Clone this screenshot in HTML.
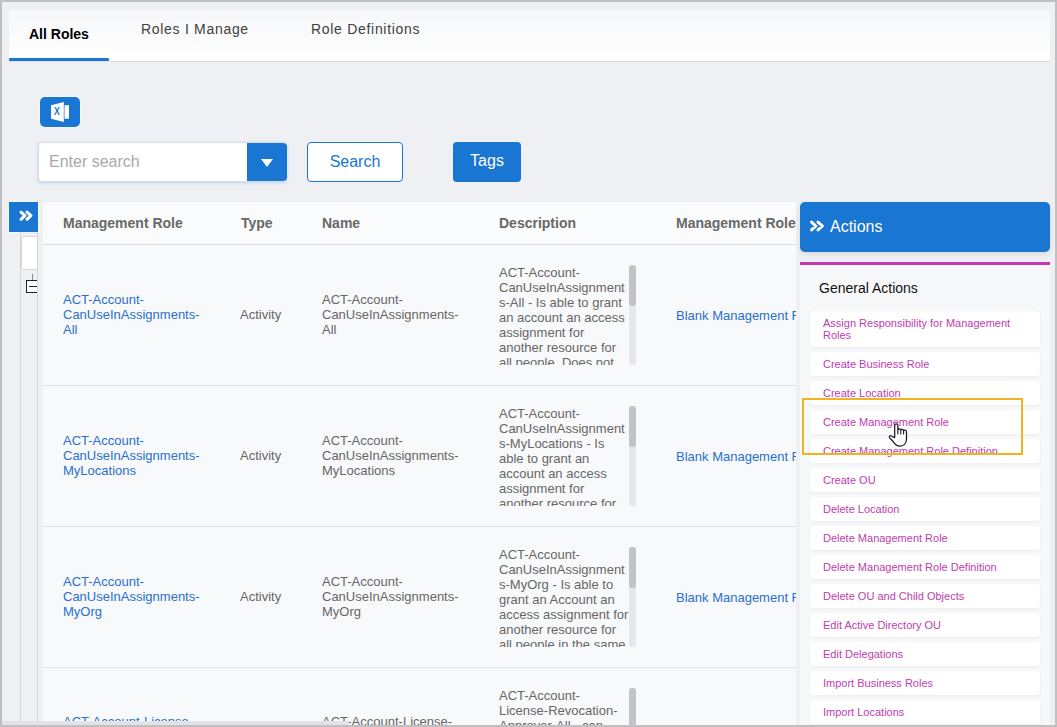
<!DOCTYPE html>
<html lang="en">
<head>
<meta charset="utf-8">
<title>Management Roles</title>
<style>
*{box-sizing:border-box;margin:0;padding:0}
html,body{width:1057px;height:727px;overflow:hidden;background:#c0c0c0}
body{font-family:"Liberation Sans",Arial,sans-serif;position:relative;color:#666}
#page{position:absolute;left:2px;top:2px;width:1053px;height:723px;background:#eff0f4;overflow:hidden}
.abs{position:absolute}
/* tabs */
#tabs{position:absolute;left:7px;top:8px;width:1041px;height:52px;background:linear-gradient(#f6f7f9,#ffffff);border-bottom:1px solid #dcdcdc}
#tabs .tab{position:absolute;top:0;height:51px;font-size:14px;color:#404040;letter-spacing:.7px;white-space:nowrap}
#tabs .tab.active{font-weight:bold;color:#000;letter-spacing:0}
#tabs .bar{position:absolute;left:0;top:48px;width:100px;height:3px;background:#1976d2;border-radius:1px}
/* toolbar */
#xl{position:absolute;left:38px;top:95px;width:40px;height:30px;background:#1976d2;border-radius:5px;box-shadow:0 0 0 1px rgba(255,255,255,.4)}
#search{position:absolute;left:36px;top:140px;width:249px;height:40px;background:#fff;border-radius:4px;border:1px solid #d9dce3;box-shadow:0 1px 3px rgba(25,118,210,.25)}
#search .ph{position:absolute;left:10px;top:0;line-height:38px;font-size:16px;color:#a9a9a9}
#search .dd{position:absolute;right:-1px;top:0;width:40px;height:38px;background:#1976d2;border-radius:0 4px 4px 0}
#search .dd:after{content:"";position:absolute;left:14px;top:16px;border-left:6px solid transparent;border-right:6px solid transparent;border-top:8px solid #fff}
#btnSearch{position:absolute;left:305px;top:140px;width:96px;height:40px;background:#fff;border:1px solid #1976d2;border-radius:4px;color:#1976d2;font-size:16px;text-align:center;line-height:38px}
#btnTags{position:absolute;left:451px;top:140px;width:68px;height:40px;background:#1976d2;border-radius:4px;color:#fff;font-size:16px;text-align:center;line-height:38px}
/* left strip */
#exp{position:absolute;left:7px;top:200px;width:29px;height:30px;background:#1976d2;box-shadow:0 0 0 1px rgba(255,255,255,.45)}
#strip{position:absolute;left:18px;top:230px;width:18px;height:493px;overflow:hidden;border-left:1px solid #d4d6da;border-right:1px solid #d4d6da;background:#eff0f4}
#strip .inp{position:absolute;left:0px;top:4px;width:20px;height:34px;background:#fff;border:1px solid #d5d7dc;border-radius:3px}
#strip .node{position:absolute;left:5px;top:48px;width:14px;height:13px;border:1px solid #222;background:#fff}
#strip .node:before{content:"";position:absolute;left:2px;top:5px;width:10px;height:1px;background:#222}
#strip .vl{position:absolute;left:11px;top:42px;width:1px;height:6px;background:#888}
/* table */
#tbl{position:absolute;left:41px;top:200px;width:753px;height:523px;background:#f8f9fb;overflow:hidden}
#tbl .hd{position:absolute;left:0;top:0;width:753px;height:43px;border-bottom:1px solid #dcdde0;background:#fafbfc}
#tbl .hd span{position:absolute;top:0;line-height:43px;font-size:14px;font-weight:bold;color:#686868;white-space:nowrap}
.row{position:absolute;left:0;width:753px;height:141px;border-bottom:1px solid #dfe0e3}
.cell{position:absolute;font-size:13px;line-height:15px;color:#666}
.cell.lnk{color:#2a6fcb}
.desc{position:absolute;left:456px;top:20px;width:140px;height:100px;overflow:hidden;font-size:13px;line-height:15px;color:#666}
.sb{position:absolute;left:586px;top:20px;width:7px;height:100px;background:#e6e7ea;border-radius:3px}
.sb i{position:absolute;left:0;top:0;width:7px;height:41px;background:#c2c3c7;border-radius:3px}
/* actions */
#act{position:absolute;left:798px;top:200px;width:250px;height:523px}
#act .hd{position:absolute;left:0;top:0;width:250px;height:50px;background:#1976d2;border-radius:5px;box-shadow:0 2px 5px rgba(0,0,0,.10);color:#fff;font-size:16px;line-height:49px}
#act .hd span{position:absolute;left:30px;top:0}
#act .pl{position:absolute;left:0;top:60px;width:250px;height:3px;background:#c239b3}
#act .bd{position:absolute;left:0;top:63px;width:250px;height:460px;background:#f7f8fa}
#act .ga{position:absolute;left:19px;top:78px;font-size:14px;color:#111;line-height:16px}
.card{position:absolute;left:10px;width:230px;height:24px;background:#fff;border-radius:4px;box-shadow:0 1px 3px rgba(0,0,0,.05);font-size:11px;line-height:12px;color:#c03cb0;padding:6px 0 0 13px;white-space:nowrap}
#hl{position:absolute;left:800px;top:396px;width:221px;height:57px;border:2px solid #f0b323}
</style>
</head>
<body>
<div id="page">
  <div id="tabs">
    <div class="tab active" style="left:20px;line-height:48px">All Roles</div>
    <div class="tab" style="left:132px;line-height:38px">Roles I Manage</div>
    <div class="tab" style="left:302px;line-height:38px">Role Definitions</div>
    <div class="bar"></div>
  </div>

  <div id="xl">
    <svg width="40" height="30" viewBox="0 0 40 30" style="position:absolute;left:0;top:0">
      <polygon points="11,8.2 23.8,5 23.8,25 11,21.7" fill="#fff"/>
      <rect x="24" y="8.2" width="1" height="13.5" fill="#8fbbe9"/>
      <rect x="25" y="8.2" width="4" height="13.5" fill="#fff"/>
      <text x="17" y="18.2" font-family="Liberation Sans, Arial, sans-serif" font-size="10.5" font-weight="bold" fill="#1976d2" text-anchor="middle" textLength="5.8" lengthAdjust="spacingAndGlyphs">X</text>
    </svg>
  </div>
  <div id="search"><div class="ph">Enter search</div><div class="dd"></div></div>
  <div id="btnSearch">Search</div>
  <div id="btnTags">Tags</div>

  <div id="exp">
    <svg width="29" height="30" viewBox="0 0 29 30" style="position:absolute;left:0;top:0">
      <path d="M12 10.1 L16 13.7 L12 17.3 M18 10.1 L22 13.7 L18 17.3" fill="none" stroke="#fff" stroke-width="3" stroke-linecap="round" stroke-linejoin="round"/>
    </svg>
  </div>
  <div id="strip"><div class="inp"></div><div class="vl"></div><div class="node"></div></div>

  <div id="tbl">
    <div class="hd">
      <span style="left:20px">Management Role</span>
      <span style="left:198px">Type</span>
      <span style="left:279px">Name</span>
      <span style="left:456px">Description</span>
      <span style="left:633px">Management Role Definition</span>
    </div>

    <div class="row" style="top:43px">
      <div class="cell lnk" style="left:20px;top:47px">ACT-Account-<br>CanUseInAssignments-<br>All</div>
      <div class="cell" style="left:197px;top:62px">Activity</div>
      <div class="cell" style="left:279px;top:47px">ACT-Account-<br>CanUseInAssignments-<br>All</div>
      <div class="desc">ACT-Account-<br>CanUseInAssignment<br>s-All - Is able to grant<br>an account an access<br>assignment for<br>another resource for<br>all people. Does not<br>grant access</div>
      <div class="sb"><i></i></div>
      <div class="cell lnk" style="left:633px;top:63px;white-space:nowrap">Blank Management Role Definition</div>
    </div>

    <div class="row" style="top:184px">
      <div class="cell lnk" style="left:20px;top:47px">ACT-Account-<br>CanUseInAssignments-<br>MyLocations</div>
      <div class="cell" style="left:197px;top:62px">Activity</div>
      <div class="cell" style="left:279px;top:47px">ACT-Account-<br>CanUseInAssignments-<br>MyLocations</div>
      <div class="desc">ACT-Account-<br>CanUseInAssignment<br>s-MyLocations - Is<br>able to grant an<br>account an access<br>assignment for<br>another resource for<br>all people in</div>
      <div class="sb"><i></i></div>
      <div class="cell lnk" style="left:633px;top:63px;white-space:nowrap">Blank Management Role Definition</div>
    </div>

    <div class="row" style="top:325px">
      <div class="cell lnk" style="left:20px;top:47px">ACT-Account-<br>CanUseInAssignments-<br>MyOrg</div>
      <div class="cell" style="left:197px;top:62px">Activity</div>
      <div class="cell" style="left:279px;top:47px">ACT-Account-<br>CanUseInAssignments-<br>MyOrg</div>
      <div class="desc">ACT-Account-<br>CanUseInAssignment<br>s-MyOrg - Is able to<br>grant an Account an<br>access assignment for<br>another resource for<br>all people in the same<br>organization</div>
      <div class="sb"><i></i></div>
      <div class="cell lnk" style="left:633px;top:63px;white-space:nowrap">Blank Management Role Definition</div>
    </div>

    <div class="row" style="top:466px">
      <div class="cell lnk" style="left:20px;top:46px;white-space:nowrap">ACT-Account-License-</div>
      <div class="cell" style="left:279px;top:46px;white-space:nowrap">ACT-Account-License-</div>
      <div class="desc">ACT-Account-<br>License-Revocation-<br>Approver-All - can<br>approve</div>
      <div class="sb"><i></i></div>
    </div>
  </div>

  <div id="act">
    <div class="hd">
      <svg width="30" height="50" viewBox="0 0 30 50" style="position:absolute;left:0;top:0">
        <path d="M11.6 20.1 L15.8 24 L11.6 27.9 M18 20.1 L22.4 24 L18 27.9" fill="none" stroke="#fff" stroke-width="3" stroke-linecap="round" stroke-linejoin="round"/>
      </svg>
      <span>Actions</span>
    </div>
    <div class="pl"></div>
    <div class="bd"></div>
    <div class="ga">General Actions</div>
    <div class="card" style="top:109px;height:36px;white-space:normal">Assign Responsibility for Management Roles</div>
    <div class="card" style="top:150px">Create Business Role</div>
    <div class="card" style="top:179px">Create Location</div>
    <div class="card" style="top:208px">Create Management Role</div>
    <div class="card" style="top:237px">Create Management Role Definition</div>
    <div class="card" style="top:266px">Create OU</div>
    <div class="card" style="top:295px">Delete Location</div>
    <div class="card" style="top:324px">Delete Management Role</div>
    <div class="card" style="top:353px">Delete Management Role Definition</div>
    <div class="card" style="top:382px">Delete OU and Child Objects</div>
    <div class="card" style="top:411px">Edit Active Directory OU</div>
    <div class="card" style="top:440px">Edit Delegations</div>
    <div class="card" style="top:469px">Import Business Roles</div>
    <div class="card" style="top:498px">Import Locations</div>
  </div>

  <div style="position:absolute;left:0;top:719px;width:347px;height:4px;background:#e1e3e7"></div>
  <div id="hl"></div>
  <svg id="cur" width="24" height="28" viewBox="0 0 24 28" style="position:absolute;left:885px;top:420px">
    <path d="M7.7 15.6 L7.7 3.2 C7.7 1.3 10.9 1.3 10.9 3.2 L10.9 7.6 C11.5 6.4 13.5 6.5 13.8 7.9 C14.4 7 16.3 7.1 16.6 8.5 C17.3 7.8 19.4 8 19.5 9.7 L19.5 17 C19.5 21.5 16.5 24.2 12.6 24.2 C9.6 24.2 7.6 22 5.8 19.2 L2.7 15.9 C1.6 14.6 3 13.2 4.3 14 Z" fill="#fff" stroke="#1b1b2b" stroke-width="1.25" stroke-linejoin="round"/>
    <path d="M10.9 7.6 L10.9 12 M13.8 8.2 L13.8 12 M16.6 8.8 L16.6 12" fill="none" stroke="#1b1b2b" stroke-width="1.1" stroke-linecap="round"/>
  </svg>
</div>
</body>
</html>
